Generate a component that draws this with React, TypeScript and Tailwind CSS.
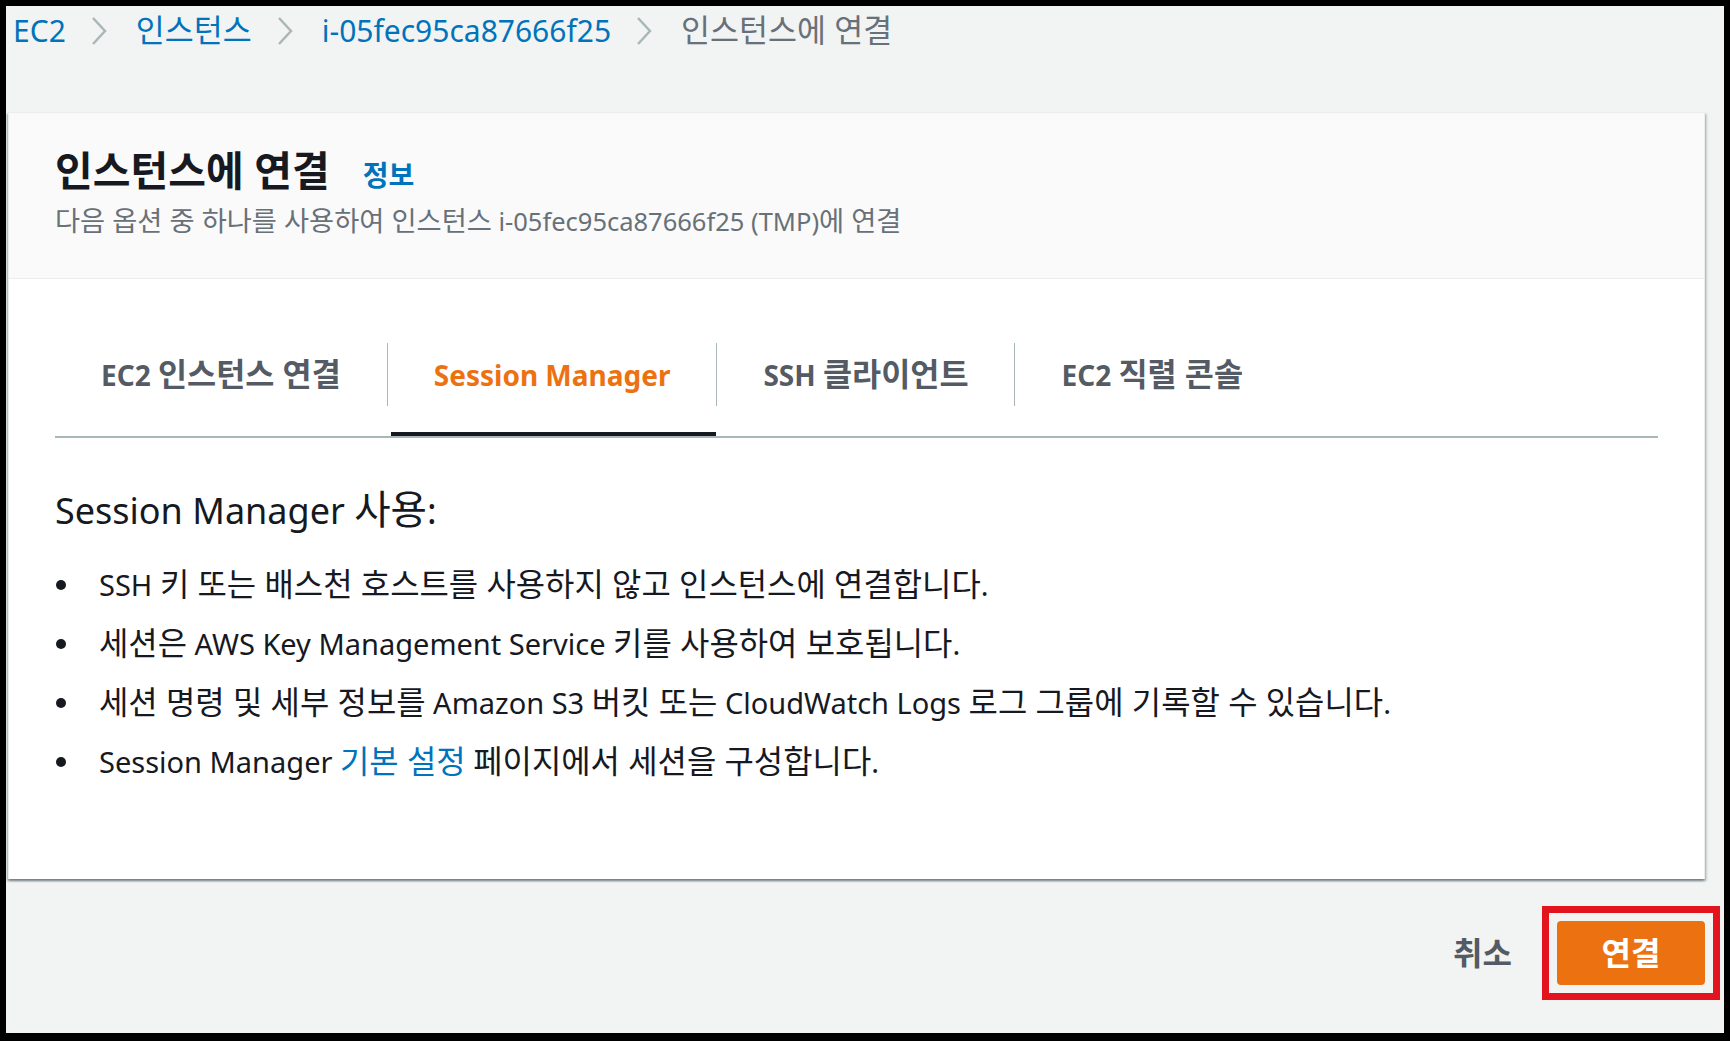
import React from "react";

// hangul runs get a bit bigger, latin stays at the base size
const ko = (text: string, cls = "text-[1.07em] leading-none") =>
  text.split(/([가-힣]+(?:\s[가-힣]+)*)/).map((part, i) =>
    /[가-힣]/.test(part) ? (
      <span key={i} className={cls}>
        {part}
      </span>
    ) : (
      part
    )
  );

const tabs = ["EC2 인스턴스 연결", "Session Manager", "SSH 클라이언트", "EC2 직렬 콘솔"];

const Chevron = () => (
  <svg width="16" height="32" viewBox="0 0 16 32" className="ml-[25px] mr-[29px] shrink-0">
    <polyline points="2,3 14,16 2,29" fill="none" stroke="#aab7b8" strokeWidth="2.5" />
  </svg>
);

const Bullet = ({ children }: { children: React.ReactNode }) => (
  <li className="flex items-center">
    <span className="ml-[1px] w-[10px] h-[10px] rounded-full bg-[#16191f] shrink-0" />
    <span className="ml-[33px]">{children}</span>
  </li>
);

const big = "text-[1.1em] leading-none";

const App = () => {
  const active = 1;

  return (
    <div className="h-[1041px] w-[1730px] bg-black pt-[6px] px-[6px] pb-[8px] font-['Noto_Sans','Noto_Sans_CJK_KR',sans-serif]">
      <div className="h-full bg-[#f2f3f3] pl-[2px] pr-[19px] flex flex-col">
        {/* breadcrumb */}
        <nav className="flex items-center pl-[5px] pt-[7px] h-[43px] text-[30px] leading-[36px]">
          <span className="text-[#0073bb]">EC2</span>
          <Chevron />
          <span className="text-[#0073bb]">{ko("인스턴스", "text-[1.05em] leading-none")}</span>
          <Chevron />
          <span className="text-[#0073bb]">i-05fec95ca87666f25</span>
          <Chevron />
          <span className="text-[#687078]">{ko("인스턴스에 연결", "text-[1.05em] leading-none")}</span>
        </nav>

        <section className="mt-[63px] bg-white border border-[#eaeded] border-b-0 shadow-[0_2px_2px_0_rgba(0,28,36,0.35),2px_2px_2px_0_rgba(0,28,36,0.15),-2px_2px_2px_0_rgba(0,28,36,0.15)]">
          <div className="bg-[#fafafa] border-b border-[#eaeded] pl-[46px] pt-[35px] pb-[40px]">
            <div className="flex items-baseline h-[44px]">
              <h1 className="text-[41px] leading-[44px] font-bold text-[#16191f]">인스턴스에 연결</h1>
              <a className="ml-[33px] text-[28px] leading-none font-bold text-[#0073bb]">정보</a>
            </div>
            <p className="mt-[12px] text-[25.5px] leading-[34px] text-[#687078]">
              {ko("다음 옵션 중 하나를 사용하여 인스턴스 ")}i-05fec95ca87666f25 (TMP){ko("에 연결")}
            </p>
          </div>

          <div className="px-[46px] pt-[64px] pb-[95px]">
            <div className="flex border-b-2 border-[#aab7b8]">
              {tabs.map((t, i) => (
                <div key={t} className="flex flex-col">
                  <div
                    className={`h-[63px] flex items-center px-[46px] text-[28px] leading-[40px] font-bold ${
                      i > 0 ? "border-l border-[#aab7b8]" : ""
                    } ${i === active ? "text-[#ec7211]" : "text-[#545b64]"}`}
                  >
                    <span>{ko(t, "text-[1.13em] leading-none")}</span>
                  </div>
                  <div className="h-[26px]" />
                  <div className={`h-[4px] ${i === active ? "bg-[#16191f] ml-[4px]" : ""}`} />
                </div>
              ))}
            </div>

            <h2 className="mt-[50px] text-[36px] leading-[46px] text-[#16191f]">
              Session Manager {ko("사용", big)}:
            </h2>

            <ul className="mt-[29px] space-y-[15px] text-[29px] leading-[44px] text-[#16191f]">
              <Bullet>SSH {ko("키 또는 배스천 호스트를 사용하지 않고 인스턴스에 연결합니다", big)}.</Bullet>
              <Bullet>
                {ko("세션은 ", big)}AWS Key Management Service {ko("키를 사용하여 보호됩니다", big)}.
              </Bullet>
              <Bullet>
                {ko("세션 명령 및 세부 정보를 ", big)}Amazon S3 {ko("버킷 또는 ", big)}CloudWatch Logs{" "}
                {ko("로그 그룹에 기록할 수 있습니다", big)}.
              </Bullet>
              <Bullet>
                Session Manager <a className="text-[#0073bb]">{ko("기본 설정", big)}</a>{" "}
                {ko("페이지에서 세션을 구성합니다", big)}.
              </Bullet>
            </ul>
          </div>
        </section>

        <div className="mt-[42px] flex items-center justify-end gap-[45px]">
          <button className="text-[32px] font-bold text-[#545b64]">취소</button>
          <div className="-m-[15px] border-[7px] border-[#e4141f] p-[8px]">
            <button className="w-[148px] h-[64px] rounded-[4px] bg-[#ec7211] text-white text-[32px] font-bold">
              연결
            </button>
          </div>
        </div>
      </div>
    </div>
  );
};

export default App;
